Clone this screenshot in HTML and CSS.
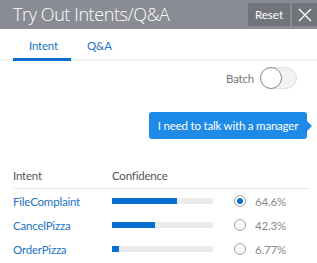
FILE: index.html
```html
<!DOCTYPE html>
<html lang="en">
<head>
    <meta charset="UTF-8">
    <title>Try Out Intents/Q&amp;A</title>
    <link rel="stylesheet" href="styles.css">
</head>
<body>
    <header class="panel-header">
        <h1 class="panel-title">Try Out Intents/Q&amp;A</h1>
        <button class="btn-reset">Reset</button>
        <button class="btn-close" aria-label="Close">
            <svg width="14" height="14" viewBox="0 0 14 14"><path d="M1 1 L13 13 M13 1 L1 13" stroke="#fff" stroke-width="1.3" fill="none"/></svg>
        </button>
    </header>

    <nav class="tabs">
        <a class="tab active">Intent</a>
        <a class="tab">Q&amp;A</a>
    </nav>

    <div class="batch-row">
        <span class="batch-label">Batch</span>
        <span class="toggle"><span class="knob"></span></span>
    </div>

    <div class="bubble-row">
        <div class="bubble">I need to talk with a manager</div>
    </div>

    <!-- Resultados -->
    <div class="results">
        <div class="results-head">
            <span>Intent</span>
            <span>Confidence</span>
        </div>
        <div class="result">
            <a class="intent-name">FileComplaint</a>
            <span class="bar"><span class="fill" style="width: 64.6%"></span></span>
            <span class="radio checked"></span>
            <span class="pct">64.6%</span>
        </div>
        <div class="result">
            <a class="intent-name">CancelPizza</a>
            <span class="bar"><span class="fill" style="width: 42.3%"></span></span>
            <span class="radio"></span>
            <span class="pct">42.3%</span>
        </div>
        <div class="result">
            <a class="intent-name">OrderPizza</a>
            <span class="bar"><span class="fill" style="width: 6.77%"></span></span>
            <span class="radio"></span>
            <span class="pct">6.77%</span>
        </div>
    </div>
</body>
</html>
```

FILE: styles.css
```css
body {
    font-family: 'Lato', sans-serif;
    margin: 0;
    padding: 0;
    background: #fff;
    color: #444;
    font-size: 11.5px;
    letter-spacing: -0.2px;
}
.panel-header {
    background-color: #8a8c94;
    height: 29px;
    display: flex;
    align-items: flex-start;
    padding-left: 13px;
    box-sizing: border-box;
}
.panel-title {
    font-family: 'Open Sans', sans-serif;
    font-weight: 300;
    font-size: 18px;
    line-height: 29px;
    color: #fff;
    margin: 0;
    flex: 1;
    letter-spacing: -0.4px;
}
.btn-reset, .btn-close {
    background: #72747b;
    border: none;
    color: #fff;
    height: 23px;
    margin-top: 3px;
    padding: 0;
    font-family: 'Lato', sans-serif;
    font-size: 11.5px;
}
.btn-reset {
    width: 42px;
}
.btn-close {
    width: 25px;
    margin-left: 2px;
    display: flex;
    align-items: center;
    justify-content: center;
}
.tabs {
    display: flex;
    padding: 0 13px;
    border-bottom: 2px solid #f1f1f1;
    height: 30px;
}
.tab {
    color: #2372c4;
    padding: 10px 16px 0;
    width: 58px;
    box-sizing: border-box;
    text-align: center;
    border-bottom: 3px solid transparent;
    margin-bottom: -2px;
}
.tab.active {
    border-bottom-color: #0a6ed1;
}
.tab + .tab {
    width: auto;
}
.batch-row {
    display: flex;
    justify-content: flex-end;
    align-items: center;
    padding-right: 20px;
    margin-top: 6px;
    gap: 6px;
}
.batch-label {
    color: #777;
}
.toggle {
    width: 37px;
    height: 22px;
    border-radius: 11px;
    background: #f2f2f2;
    border: 1px solid #e0e0e0;
    box-sizing: border-box;
    position: relative;
}
.knob {
    position: absolute;
    left: -1px;
    top: -1px;
    width: 22px;
    height: 22px;
    border-radius: 50%;
    background: #fff;
    border: 1px solid #8a8a8a;
    box-sizing: border-box;
}
.bubble-row {
    display: flex;
    justify-content: flex-end;
    padding-right: 10px;
    margin-top: 23px;
}
.bubble {
    background: #1e8ae8;
    color: #fff;
    height: 27px;
    line-height: 27px;
    border-radius: 3px;
    position: relative;
    width: 158px;
    white-space: nowrap;
    box-sizing: border-box;
    text-align: center;
}
.bubble::after {
    content: "";
    position: absolute;
    right: -5px;
    top: 9px;
    border-left: 5px solid #1e8ae8;
    border-top: 5px solid transparent;
    border-bottom: 5px solid transparent;
}
.results {
    margin: 25px 9px 0 13px;
}
.results-head {
    display: flex;
    color: #555;
    border-bottom: 1px solid #e4e4e4;
    height: 24px;
    line-height: 24px;
}
.results-head span:first-child {
    width: 99px;
}
.result {
    display: flex;
    align-items: center;
    height: 24px;
}
.result:first-of-type {
    margin-top: 3px;
}
.intent-name {
    color: #2372c4;
    width: 99px;
}
.bar {
    width: 101px;
    height: 6px;
    background: #ebebeb;
    border-radius: 2px;
    display: block;
}
.fill {
    display: block;
    height: 100%;
    background: #0a6ed1;
}
.radio {
    width: 12px;
    height: 12px;
    border: 1px solid #a0a0a0;
    border-radius: 50%;
    box-sizing: border-box;
    margin-left: 21px;
    position: relative;
}
.radio.checked::after {
    content: "";
    position: absolute;
    left: 2px;
    top: 2px;
    width: 6px;
    height: 6px;
    border-radius: 50%;
    background: #0a6ed1;
}
.pct {
    color: #888;
    margin-left: 9px;
}
```
